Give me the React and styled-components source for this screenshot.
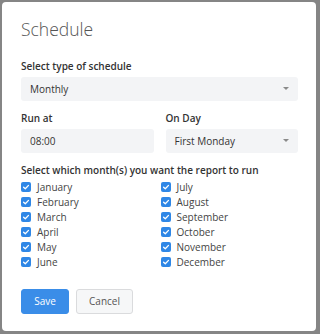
import React from "react";
import styled, { createGlobalStyle } from "styled-components";

const Global = createGlobalStyle`
  html, body { margin: 0; padding: 0; }
  body {
    background: #858585;
    font-family: "Open Sans", "Noto Sans", sans-serif;
    height: 334px;
    overflow: hidden;
  }
`;

const Page = styled.div`
  padding: 2px 0 0 2px;
`;

const Dialog = styled.div`
  width: 314px;
  height: 329px;
  box-sizing: border-box;
  background: #fff;
  border-radius: 4px;
  padding: 15px 18px 0 19px;
  display: flex;
  flex-direction: column;
`;

const Title = styled.h1`
  margin: 0;
  font-size: 17.5px;
  line-height: 24px;
  font-weight: 300;
  color: #555;
`;

const Label = styled.div`
  font-size: 10px;
  line-height: 14px;
  font-weight: 600;
  color: #333;
  margin-top: ${(p) => p.$mt || 0}px;
  margin-bottom: ${(p) => p.$mb ?? 4}px;
`;

const Field = styled.div`
  height: 24px;
  box-sizing: border-box;
  background: #f3f4f6;
  border-radius: 3px;
  display: flex;
  align-items: center;
  justify-content: space-between;
  padding: 0 9px 0 9px;
  font-size: 10px;
  color: #333;
`;

const Caret = styled.span`
  width: 0;
  height: 0;
  border-left: 3px solid transparent;
  border-right: 3px solid transparent;
  border-top: 3px solid #8a8a8a;
`;

const TwoCols = styled.div`
  display: grid;
  grid-template-columns: 1fr 1fr;
  column-gap: 12px;
`;

const MonthGrid = styled.div`
  display: grid;
  grid-template-columns: 139.5px 1fr;
  grid-auto-flow: column;
  grid-template-rows: repeat(6, 15px);
  margin-top: 2px;
`;

const MonthItem = styled.label`
  display: flex;
  align-items: center;
  gap: 6px;
  font-size: 10px;
  color: #444;
`;

const Box = styled.span`
  width: 10px;
  height: 10px;
  border-radius: 2px;
  background: #2f87e6;
  display: flex;
  align-items: center;
  justify-content: center;
`;

const Buttons = styled.div`
  display: flex;
  gap: 7px;
  margin-top: 20px;
`;

const Button = styled.button`
  height: 24.5px;
  box-sizing: border-box;
  padding: 0;
  width: ${(p) => p.$w}px;
  border-radius: 3px;
  font-family: inherit;
  font-size: 10px;
  border: 1px solid ${(p) => (p.$primary ? "#3a8de8" : "#dadbdd")};
  background: ${(p) => (p.$primary ? "#3a8de8" : "#f6f7f8")};
  color: ${(p) => (p.$primary ? "#fff" : "#555")};
`;

const Backdrop = styled.div`
  margin: 1px 0 0 118px;
  font-size: 11px;
  line-height: 14px;
  color: #2a2a2a;
  white-space: nowrap;
`;

const months = [
  "January", "February", "March", "April", "May", "June",
  "July", "August", "September", "October", "November", "December",
];

const Check = () => (
  <svg width="8" height="8" viewBox="0 0 8 8">
    <path d="M1.6 4.2 L3.3 5.8 L6.5 2.4" fill="none" stroke="#fff" strokeWidth="1.3" strokeLinecap="round" strokeLinejoin="round" />
  </svg>
);

export default function App() {
  return (
    <>
      <Global />
      <Page>
        <Dialog>
          <Title>Schedule</Title>
          <Label $mt={17.5}>Select type of schedule</Label>
          <Field>
            <span>Monthly</span>
            <Caret />
          </Field>
          <TwoCols>
            <div>
              <Label $mt={10}>Run at</Label>
              <Field>
                <span>08:00</span>
              </Field>
            </div>
            <div>
              <Label $mt={10}>On Day</Label>
              <Field>
                <span>First Monday</span>
                <Caret />
              </Field>
            </div>
          </TwoCols>
          <Label $mt={10.5} $mb={0}>Select which month(s) you want the report to run</Label>
          <MonthGrid>
            {months.map((m) => (
              <MonthItem key={m}>
                <Box>
                  <Check />
                </Box>
                {m}
              </MonthItem>
            ))}
          </MonthGrid>
          <Buttons>
            <Button $primary $w={48}>Save</Button>
            <Button $w={57}>Cancel</Button>
          </Buttons>
        </Dialog>
        <Backdrop>—&nbsp;&nbsp;&nbsp;Won at values per company and countries</Backdrop>
      </Page>
    </>
  );
}
